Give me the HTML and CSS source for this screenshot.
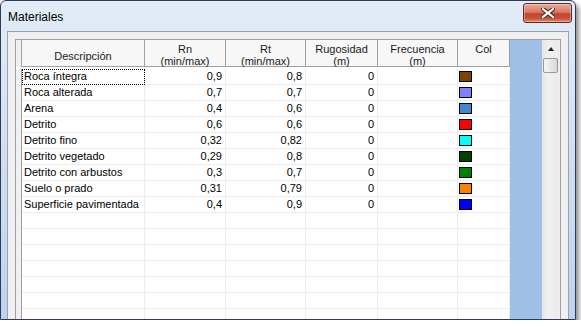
FILE: index.html
```html
<!DOCTYPE html>
<html lang="es">
<head>
    <meta charset="UTF-8">
    <title>Materiales</title>
    <link rel="stylesheet" href="styles.css">
</head>
<body>
    <div class="window">
        <!-- barra de titulo -->
        <div class="titlebar">
            <span class="title">Materiales</span>
            <div class="close-btn">
                <svg width="14" height="10" viewBox="0 0 14 10">
                    <path d="M2 1 L12 9 M12 1 L2 9" stroke="#4a2a26" stroke-width="4.2" stroke-linecap="square"/>
                    <path d="M2 1 L12 9 M12 1 L2 9" stroke="#ffffff" stroke-width="2.2" stroke-linecap="square"/>
                </svg>
            </div>
        </div>

        <div class="client">
            <div class="panel">
                <div class="sheet">
                    <div class="grid">
                        <div class="head">
                            <div class="rh"></div>
                            <div class="hc hc-mid">Descripción</div>
                            <div class="hc">Rn<br>(min/max)</div>
                            <div class="hc">Rt<br>(min/max)</div>
                            <div class="hc">Rugosidad<br>(m)</div>
                            <div class="hc">Frecuencia<br>(m)</div>
                            <div class="hc">Col</div>
                        </div>
                        <div class="body" id="rows"></div>
                    </div>
                </div>
                <div class="vscroll">
                    <div class="arrow-up"></div>
                    <div class="thumb"></div>
                </div>
            </div>
        </div>
    </div>

    <script>
        const materiales = [
            ["Roca íntegra", "0,9", "0,8", "0", "#804000"],
            ["Roca alterada", "0,7", "0,7", "0", "#8080ff"],
            ["Arena", "0,4", "0,6", "0", "#4488cc"],
            ["Detrito", "0,6", "0,6", "0", "#ff0000"],
            ["Detrito fino", "0,32", "0,82", "0", "#00ffff"],
            ["Detrito vegetado", "0,29", "0,8", "0", "#004000"],
            ["Detrito con arbustos", "0,3", "0,7", "0", "#008000"],
            ["Suelo o prado", "0,31", "0,79", "0", "#ff8000"],
            ["Superficie pavimentada", "0,4", "0,9", "0", "#0000ff"]
        ];

        const rows = document.getElementById('rows');
        let html = '';
        materiales.forEach((m, i) => {
            html += '<div class="row">'
                + '<div class="rh"></div>'
                + '<div class="c c-text' + (i === 0 ? ' focus' : '') + '">' + m[0] + '</div>'
                + '<div class="c c-num">' + m[1] + '</div>'
                + '<div class="c c-num">' + m[2] + '</div>'
                + '<div class="c c-num">' + m[3] + '</div>'
                + '<div class="c"></div>'
                + '<div class="c"><span class="swatch" style="background:' + m[4] + '"></span></div>'
                + '</div>';
        });
        // filas vacias
        for (let i = 0; i < 8; i++) {
            html += '<div class="row"><div class="rh"></div>'
                + '<div class="c"></div><div class="c"></div><div class="c"></div>'
                + '<div class="c"></div><div class="c"></div><div class="c"></div></div>';
        }
        rows.innerHTML = html;
    </script>
</body>
</html>
```

FILE: styles.css
```css
body {
    margin: 0;
    background: #ffffff;
    font-family: "Liberation Sans", Arial, sans-serif;
    font-size: 11px;
    color: #000;
}

.window {
    width: 576px;
    height: 320px;
    box-sizing: border-box;
    border: 1px solid #2c3b58;
    border-radius: 6px 6px 0 0;
    background: linear-gradient(to bottom, #e3ecf7 0%, #d3e1f1 40%, #bcd3ee 100%);
    box-shadow: 3px 4px 5px rgba(0, 0, 0, 0.45);
    padding: 0 6px;
    overflow: hidden;
}

.titlebar {
    height: 30px;
    display: flex;
    justify-content: space-between;
    align-items: flex-start;
    margin: 0 -6px;
    padding: 0 3px 0 7px;
}

.title {
    font-size: 12px;
    line-height: 14px;
    padding-top: 9px;
    color: #000;
}

.close-btn {
    width: 47px;
    height: 18px;
    margin-top: 2px;
    border: 1px solid #5a2a22;
    border-radius: 3px;
    background: linear-gradient(to bottom, #e9a899 0%, #d67a64 45%, #c4432a 55%, #c9523a 80%, #e08a6c 100%);
    box-shadow: inset 0 0 0 1px rgba(255, 255, 255, 0.35);
    display: flex;
    align-items: center;
    justify-content: center;
}

.client {
    height: 288px;
    box-sizing: border-box;
    border: 1px solid #9aa3b0;
    border-bottom: none;
    background: #f0f0f0;
    padding: 7px 7px 0 7px;
    overflow: hidden;
}

.panel {
    display: flex;
    border: 1px solid #a0a0a0;
    height: 300px;
}

.sheet {
    width: 526px;
    background: #9fbfe6;
}

.grid {
    width: 494px;
    background: #fff;
    height: 100%;
}

.head,
.row {
    display: grid;
    grid-template-columns: 6px 123px 81px 80px 72px 80px 52px;
}

.head {
    height: 27px;
    border-bottom: 1px solid #a0a0a0;
    box-sizing: border-box;
    background: #f7f7f7;
}

.body {
    padding-top: 2px;
}

.rh {
    background: #f0f0f0;
    border-right: 1px solid #a0a0a0;
}

.hc {
    border-right: 1px solid #a0a0a0;
    text-align: center;
    line-height: 12px;
    padding-top: 3px;
    color: #1a1a1a;
}

.hc-mid {
    padding-top: 10px;
}

.row {
    height: 16px;
    box-sizing: border-box;
}

.row .c {
    border-right: 1px solid #ececec;
    border-bottom: 1px solid #ececec;
    line-height: 15px;
    white-space: nowrap;
    overflow: hidden;
}

.c-text {
    padding-left: 2px;
}

.c-num {
    text-align: right;
    padding-right: 3px;
}

.focus {
    outline: 1px dotted #000;
    outline-offset: -1px;
}

.swatch {
    display: block;
    width: 13px;
    height: 11px;
    box-sizing: border-box;
    border: 1px solid #000;
    margin: 2px 0 0 1px;
}

.vscroll {
    width: 17px;
    background: linear-gradient(to right, #e6e6e6, #f0f0f0 40%, #ebebeb);
    position: relative;
}

.arrow-up {
    width: 0;
    height: 0;
    margin: 7px auto 0;
    border-left: 3.5px solid transparent;
    border-right: 3.5px solid transparent;
    border-bottom: 4px solid #222;
}

.thumb {
    width: 15px;
    height: 15px;
    margin: 7px 0 0 1px;
    box-sizing: border-box;
    border: 1px solid #9a9a9a;
    border-radius: 2px;
    background: linear-gradient(to right, #f6f6f6, #e8e8e8 50%, #d6d6d6);
}
```
